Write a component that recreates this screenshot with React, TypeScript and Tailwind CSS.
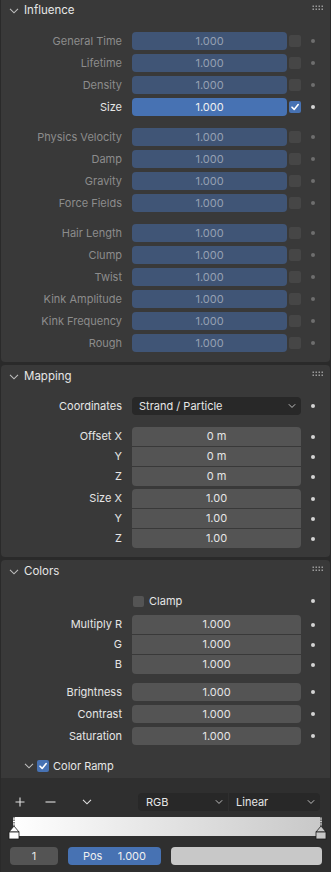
import React from "react";

const FONT = { fontFamily: "Inter, 'Noto Sans', sans-serif" };

function Chevron({ className = "" }: { className?: string }) {
  return (
    <svg width="10" height="6" viewBox="0 0 10 6" className={className}>
      <polyline points="1,0.8 5,4.8 9,0.8" fill="none" stroke="currentColor" strokeWidth="1.1" />
    </svg>
  );
}

function Grip() {
  return (
    <svg width="12" height="6" viewBox="0 0 12 6">
      {[0, 1, 2, 3].map((i) =>
        [0, 1].map((j) => (
          <rect key={`${i}-${j}`} x={i * 3 + 0.5} y={j * 3 + 0.5} width="1.5" height="1.5" fill="#9a9a9a" />
        ))
      )}
    </svg>
  );
}

function Check({ size = 10 }: { size?: number }) {
  return (
    <svg width={size} height={size} viewBox="0 0 10 10">
      <polyline points="2,5.2 4.2,7.4 8.2,2.6" fill="none" stroke="#ffffff" strokeWidth="1.6" strokeLinecap="round" strokeLinejoin="round" />
    </svg>
  );
}

function Dot({ dim = false }: { dim?: boolean }) {
  return (
    <div className="w-[24px] flex justify-center">
      <div className={`w-[4px] h-[4px] rounded-full ${dim ? "bg-[#6e6e6e]" : "bg-[#d4d4d4]"}`} />
    </div>
  );
}

function Header({ title, h = "h-[22px]" }: { title: string; h?: string }) {
  return (
    <div className={`${h} flex items-center pl-[8px] pr-[6px]`}>
      <Chevron className="text-[#bdbdbd]" />
      <span className="ml-[5px] text-[11.5px] text-[#e6e6e6]">{title}</span>
      <div className="ml-auto mt-[-6px]">
        <Grip />
      </div>
    </div>
  );
}

function InfRow({ label, active = false }: { label: string; active?: boolean }) {
  return (
    <div className="h-[18px] flex items-center">
      <div className={`w-[121px] text-right text-[11px] ${active ? "text-[#e6e6e6]" : "text-[#8c8c8c]"}`}>{label}</div>
      <div
        className={`ml-[10px] w-[155px] h-[18px] rounded-[4px] flex items-center justify-center text-[11px] ${
          active ? "bg-[#4772b3] text-[#f0f0f0]" : "bg-[#405576] text-[#95a0b2]"
        }`}
      >
        1.000
      </div>
      {active ? (
        <div className="ml-[2px] w-[12px] h-[12px] rounded-[2px] bg-[#4772b3] flex items-center justify-center">
          <Check />
        </div>
      ) : (
        <div className="ml-[2px] w-[12px] h-[12px] rounded-[2px] bg-[#464646]" />
      )}
      <Dot dim={!active} />
    </div>
  );
}

function Group({ labels, active }: { labels: string[]; active?: string }) {
  return (
    <div className="flex flex-col gap-[4px]">
      {labels.map((l) => (
        <InfRow key={l} label={l} active={l === active} />
      ))}
    </div>
  );
}

function Stack({ rows }: { rows: { label: string; value: string }[] }) {
  return (
    <div className="flex">
      <div className="flex flex-col gap-px">
        {rows.map((r) => (
          <div key={r.label} className="h-[19px] flex items-center">
            <div className="w-[121px] text-right text-[11px] text-[#e6e6e6]">{r.label}</div>
          </div>
        ))}
      </div>
      <div className="ml-[10px] w-[169px] flex flex-col gap-px rounded-[4px] overflow-hidden">
        {rows.map((r) => (
          <div key={r.label} className="h-[19px] bg-[#545454] flex items-center justify-center text-[11px] text-[#e6e6e6]">
            {r.value}
          </div>
        ))}
      </div>
      <div className="flex flex-col gap-px">
        {rows.map((r) => (
          <div key={r.label} className="h-[19px] flex items-center">
            <Dot />
          </div>
        ))}
      </div>
    </div>
  );
}

function SingleRow({ label, value }: { label: string; value: string }) {
  return (
    <div className="h-[18px] flex items-center">
      <div className="w-[121px] text-right text-[11px] text-[#e6e6e6]">{label}</div>
      <div className="ml-[10px] w-[169px] h-[18px] rounded-[4px] bg-[#545454] flex items-center justify-center text-[11px] text-[#e6e6e6]">
        {value}
      </div>
      <Dot />
    </div>
  );
}

function Marker({ fill }: { fill: string }) {
  return (
    <svg width="12" height="24" viewBox="0 0 12 24">
      <line x1="6" y1="0" x2="6" y2="10" stroke="#1a1a1a" strokeWidth="1" strokeDasharray="1.5 1" />
      <polygon points="6,9 11,15 1,15" fill={fill} stroke="#1a1a1a" strokeWidth="0.8" />
      <rect x="1" y="15" width="10" height="7" fill={fill} stroke="#1a1a1a" strokeWidth="0.8" />
    </svg>
  );
}

export default function App() {
  return (
    <div style={FONT} className="w-[331px] h-[872px] bg-[#2a2a2a] overflow-hidden">
      {/* Influence */}
      <div className="mx-[1px] bg-[#393939] rounded-b-[4px] h-[362px]">
        <Header title="Influence" h="h-[22px]" />
        <div className="pt-[10px] flex flex-col gap-[12px]">
          <Group labels={["General Time", "Lifetime", "Density", "Size"]} active="Size" />
          <Group labels={["Physics Velocity", "Damp", "Gravity", "Force Fields"]} />
          <Group labels={["Hair Length", "Clump", "Twist", "Kink Amplitude", "Kink Frequency", "Rough"]} />
        </div>
      </div>

      {/* Mapping */}
      <div className="mt-[3px] mx-[1px] bg-[#393939] rounded-[4px] h-[192px]">
        <Header title="Mapping" h="h-[24px]" />
        <div className="pt-[8px]">
          <div className="h-[18px] flex items-center">
            <div className="w-[121px] text-right text-[11px] text-[#e6e6e6]">Coordinates</div>
            <div className="ml-[10px] w-[169px] h-[18px] rounded-[4px] bg-[#282828] flex items-center pl-[7px] pr-[5px] text-[11px] text-[#e6e6e6]">
              <span>Strand / Particle</span>
              <Chevron className="ml-auto text-[#d0d0d0] w-[8px]" />
            </div>
            <Dot />
          </div>
          <div className="mt-[12px]">
            <Stack
              rows={[
                { label: "Offset X", value: "0 m" },
                { label: "Y", value: "0 m" },
                { label: "Z", value: "0 m" },
              ]}
            />
          </div>
          <div className="mt-[3px]">
            <Stack
              rows={[
                { label: "Size X", value: "1.00" },
                { label: "Y", value: "1.00" },
                { label: "Z", value: "1.00" },
              ]}
            />
          </div>
        </div>
      </div>

      {/* Colors */}
      <div className="mt-[3px] mx-[1px] bg-[#393939] rounded-t-[4px] h-[319px] flex flex-col">
        <Header title="Colors" h="h-[24px]" />
        <div className="pt-[8px]">
          <div className="h-[18px] flex items-center">
            <div className="w-[121px]" />
            <div className="ml-[11px] w-[169px] flex items-center">
              <div className="w-[11px] h-[11px] rounded-[2px] bg-[#545454]" />
              <span className="ml-[5px] text-[11px] text-[#e6e6e6]">Clamp</span>
            </div>
            <div className="ml-[-1px]">
              <Dot />
            </div>
          </div>
          <div className="mt-[5px]">
            <Stack
              rows={[
                { label: "Multiply R", value: "1.000" },
                { label: "G", value: "1.000" },
                { label: "B", value: "1.000" },
              ]}
            />
          </div>
          <div className="mt-[9px] flex flex-col gap-[4px]">
            <SingleRow label="Brightness" value="1.000" />
            <SingleRow label="Contrast" value="1.000" />
            <SingleRow label="Saturation" value="1.000" />
          </div>
          <div className="mt-[11px] h-[20px] flex items-center pl-[23px]">
            <Chevron className="text-[#bdbdbd]" />
            <div className="ml-[3px] w-[12px] h-[12px] rounded-[2px] bg-[#4772b3] flex items-center justify-center">
              <Check />
            </div>
            <span className="ml-[4px] text-[11px] text-[#e6e6e6]">Color Ramp</span>
          </div>
        </div>
        <div className="mt-[2px] flex-1 bg-[#2f2f2f]">
          <div className="mt-[15px] h-[18px] flex items-center">
            <div className="w-[137px] flex items-center text-[#e0e0e0]">
              <svg width="10" height="10" viewBox="0 0 10 10" className="ml-[14px]">
                <path d="M5 0.5V9.5M0.5 5H9.5" stroke="currentColor" strokeWidth="1.1" />
              </svg>
              <svg width="11" height="10" viewBox="0 0 11 10" className="ml-[20px]">
                <path d="M0.5 5H10.5" stroke="currentColor" strokeWidth="1.1" />
              </svg>
              <Chevron className="ml-[26px] text-[#e0e0e0]" />
            </div>
            <div className="flex w-[182px]">
              <div className="w-[90px] h-[18px] bg-[#282828] rounded-l-[4px] flex items-center pl-[8px] pr-[5px] text-[11px] text-[#e6e6e6]">
                <span>RGB</span>
                <Chevron className="ml-auto w-[8px] text-[#d0d0d0]" />
              </div>
              <div className="ml-px w-[91px] h-[18px] bg-[#282828] rounded-r-[4px] flex items-center pl-[7px] pr-[5px] text-[11px] text-[#e6e6e6]">
                <span>Linear</span>
                <Chevron className="ml-auto w-[8px] text-[#d0d0d0]" />
              </div>
            </div>
          </div>
          <div className="relative mt-[6px] ml-[12px] w-[309px] h-[19px] bg-gradient-to-r from-[#ffffff] to-[#c8c8c8]">
            <div className="absolute left-[-5px] top-0">
              <Marker fill="#ffffff" />
            </div>
            <div className="absolute right-[-5px] top-0">
              <Marker fill="#c8c8c8" />
            </div>
          </div>
          <div className="mt-[11px] h-[18px] flex items-center">
            <div className="ml-[9px] w-[48px] h-[18px] rounded-[4px] bg-[#545454] flex items-center justify-center text-[11px] text-[#e6e6e6]">
              1
            </div>
            <div className="ml-[10px] w-[93px] h-[18px] rounded-[4px] bg-[#4772b3] flex items-center justify-between px-[15px] text-[11px] text-[#f0f0f0]">
              <span>Pos</span>
              <span>1.000</span>
            </div>
            <div className="ml-[10px] w-[151px] h-[18px] rounded-[4px] bg-[#c8c8c8]" />
          </div>
        </div>
      </div>
    </div>
  );
}
